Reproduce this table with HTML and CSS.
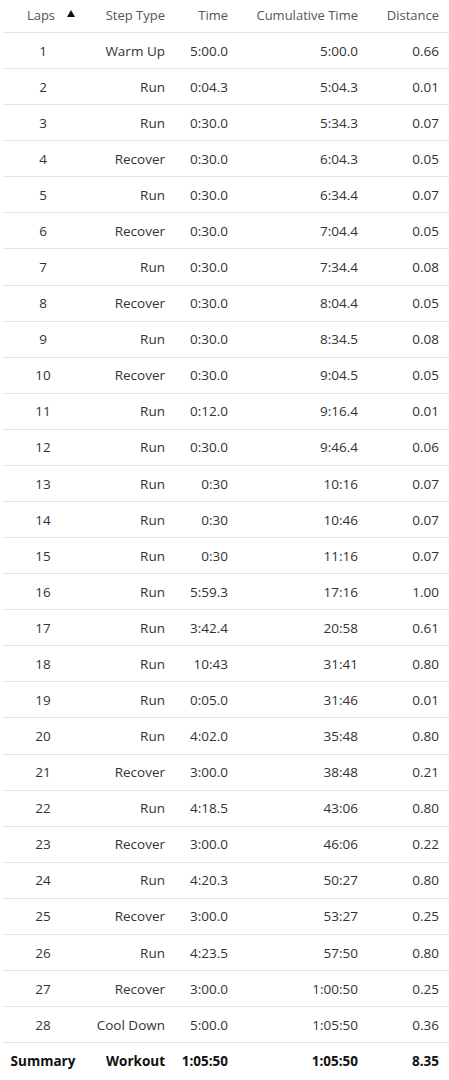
FILE: index.html
```html
<!DOCTYPE html>
<html>
<head>
<meta charset="utf-8">
<link rel="stylesheet" href="styles.css">
</head>
<body>
<table class="laps">
  <colgroup>
    <col class="c1"><col class="c2"><col class="c3"><col class="c4"><col class="c5">
  </colgroup>
  <thead>
    <tr>
      <th class="center"><span class="sort">Laps<span class="arrow"></span></span></th>
      <th>Step Type</th>
      <th>Time</th>
      <th>Cumulative Time</th>
      <th>Distance</th>
    </tr>
  </thead>
  <tbody>
    <tr><td class="center">1</td><td>Warm Up</td><td>5:00.0</td><td>5:00.0</td><td>0.66</td></tr>
    <tr><td class="center">2</td><td>Run</td><td>0:04.3</td><td>5:04.3</td><td>0.01</td></tr>
    <tr><td class="center">3</td><td>Run</td><td>0:30.0</td><td>5:34.3</td><td>0.07</td></tr>
    <tr><td class="center">4</td><td>Recover</td><td>0:30.0</td><td>6:04.3</td><td>0.05</td></tr>
    <tr><td class="center">5</td><td>Run</td><td>0:30.0</td><td>6:34.4</td><td>0.07</td></tr>
    <tr><td class="center">6</td><td>Recover</td><td>0:30.0</td><td>7:04.4</td><td>0.05</td></tr>
    <tr><td class="center">7</td><td>Run</td><td>0:30.0</td><td>7:34.4</td><td>0.08</td></tr>
    <tr><td class="center">8</td><td>Recover</td><td>0:30.0</td><td>8:04.4</td><td>0.05</td></tr>
    <tr><td class="center">9</td><td>Run</td><td>0:30.0</td><td>8:34.5</td><td>0.08</td></tr>
    <tr><td class="center">10</td><td>Recover</td><td>0:30.0</td><td>9:04.5</td><td>0.05</td></tr>
    <tr><td class="center">11</td><td>Run</td><td>0:12.0</td><td>9:16.4</td><td>0.01</td></tr>
    <tr><td class="center">12</td><td>Run</td><td>0:30.0</td><td>9:46.4</td><td>0.06</td></tr>
    <tr><td class="center">13</td><td>Run</td><td>0:30</td><td>10:16</td><td>0.07</td></tr>
    <tr><td class="center">14</td><td>Run</td><td>0:30</td><td>10:46</td><td>0.07</td></tr>
    <tr><td class="center">15</td><td>Run</td><td>0:30</td><td>11:16</td><td>0.07</td></tr>
    <tr><td class="center">16</td><td>Run</td><td>5:59.3</td><td>17:16</td><td>1.00</td></tr>
    <tr><td class="center">17</td><td>Run</td><td>3:42.4</td><td>20:58</td><td>0.61</td></tr>
    <tr><td class="center">18</td><td>Run</td><td>10:43</td><td>31:41</td><td>0.80</td></tr>
    <tr><td class="center">19</td><td>Run</td><td>0:05.0</td><td>31:46</td><td>0.01</td></tr>
    <tr><td class="center">20</td><td>Run</td><td>4:02.0</td><td>35:48</td><td>0.80</td></tr>
    <tr><td class="center">21</td><td>Recover</td><td>3:00.0</td><td>38:48</td><td>0.21</td></tr>
    <tr><td class="center">22</td><td>Run</td><td>4:18.5</td><td>43:06</td><td>0.80</td></tr>
    <tr><td class="center">23</td><td>Recover</td><td>3:00.0</td><td>46:06</td><td>0.22</td></tr>
    <tr><td class="center">24</td><td>Run</td><td>4:20.3</td><td>50:27</td><td>0.80</td></tr>
    <tr><td class="center">25</td><td>Recover</td><td>3:00.0</td><td>53:27</td><td>0.25</td></tr>
    <tr><td class="center">26</td><td>Run</td><td>4:23.5</td><td>57:50</td><td>0.80</td></tr>
    <tr><td class="center">27</td><td>Recover</td><td>3:00.0</td><td>1:00:50</td><td>0.25</td></tr>
    <tr><td class="center">28</td><td>Cool Down</td><td>5:00.0</td><td>1:05:50</td><td>0.36</td></tr>
  </tbody>
  <tfoot>
    <tr><td class="center">Summary</td><td>Workout</td><td>1:05:50</td><td>1:05:50</td><td>8.35</td></tr>
  </tfoot>
</table>
</body>
</html>
```

FILE: styles.css
```css
html, body {
  margin: 0;
  padding: 0;
  background: #ffffff;
}

body {
  font-family: "Open Sans", "Liberation Sans", sans-serif;
  font-size: 13.5px;
  color: #333333;
}

.laps {
  margin-left: 3px;
  width: 446px;
  border-collapse: collapse;
  table-layout: fixed;
}

.c1 { width: 80px; }
.c2 { width: 92px; }
.c3 { width: 63px; }
.c4 { width: 130px; }
.c5 { width: 81px; }

.laps th,
.laps td {
  text-align: right;
  padding: 0 10px 0 0;
  white-space: nowrap;
}

.laps th {
  height: 29px;
  padding-bottom: 3px;
  font-size: 13px;
  font-weight: normal;
  color: #555555;
  border-bottom: 1px solid #e3e3e3;
}

.laps tbody td {
  height: 35px;
  padding-top: 0.09px;
  border-bottom: 1px solid #e3e3e3;
}

.laps tfoot td {
  height: 36px;
  font-weight: bold;
  color: #111111;
}

.laps .center {
  text-align: center;
  padding-right: 0;
}

.laps th.center {
  padding-right: 4px;
}

.sort {
  position: relative;
}

.arrow {
  position: absolute;
  left: 40px;
  top: 4px;
  width: 0;
  height: 0;
  border-left: 4px solid transparent;
  border-right: 4px solid transparent;
  border-bottom: 7px solid #111111;
}
```
